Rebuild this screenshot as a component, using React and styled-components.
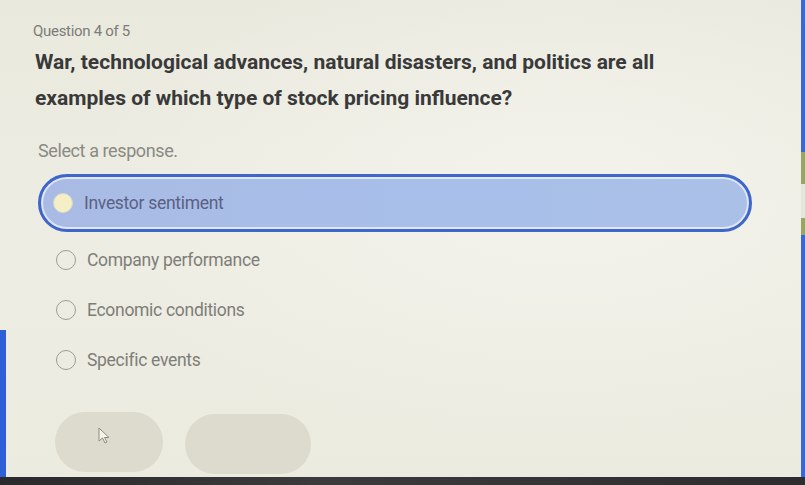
import React, { useState } from 'react';
import styled, { createGlobalStyle } from 'styled-components';

const GlobalStyle = createGlobalStyle`
  html, body {
    margin: 0;
    padding: 0;
    background: #ecebdf;
  }
  body {
    font-family: Roboto, "Liberation Sans", sans-serif;
  }
`;

const options = [
  'Investor sentiment',
  'Company performance',
  'Economic conditions',
  'Specific events',
];

function Cursor() {
  return (
    <svg width="16" height="18" viewBox="0 0 16 18">
      <path d="M2 1 L2 14 L5.5 11 L8 16 L10 15 L7.5 10.5 L12 10.5 Z" fill="#f4f3ea" stroke="#8d8b80" strokeWidth="1" strokeLinejoin="round" />
    </svg>
  );
}

function App() {
  const [selected, setSelected] = useState(0);

  return (
    <>
      <GlobalStyle />
      <Screen>
        <Body>
          <LeftRail>
            <RailPiece $h={330} $color="transparent" />
            <RailPiece $grow $color="#2f5fd6" />
          </LeftRail>
          <Quiz>
            <Counter>Question 4 of 5</Counter>
            <Prompt>
              War, technological advances, natural disasters, and politics are all
              examples of which type of stock pricing influence?
            </Prompt>
            <Hint>Select a response.</Hint>
            <OptionList>
              {options.map((label, i) => (
                <Option key={label} $active={selected === i} onClick={() => setSelected(i)}>
                  <Radio $active={selected === i} />
                  <OptionLabel $active={selected === i}>{label}</OptionLabel>
                </Option>
              ))}
            </OptionList>
            <Actions>
              <GhostButton $w={108}>
                <Cursor />
              </GhostButton>
              <GhostButton $w={126} $offset={2} />
            </Actions>
          </Quiz>
          <RightRail>
            <RailPiece $h={152} $color="#3a67d4" />
            <RailPiece $h={32} $color="#9aa466" />
            <RailPiece $h={34} $color="#e6e6dc" />
            <RailPiece $h={17} $color="#9aa466" />
            <RailPiece $grow $color="#3a67d4" />
          </RightRail>
        </Body>
        <BottomBar />
      </Screen>
    </>
  );
}

const Screen = styled.div`
  width: 805px;
  height: 485px;
  display: flex;
  flex-direction: column;
  overflow: hidden;
  background:
    radial-gradient(ellipse at 70% 40%, #f3f3ec 0%, rgba(243,243,236,0) 60%),
    linear-gradient(180deg, #eae9de 0%, #edede3 50%, #ecebe0 100%);
`;

const Body = styled.div`
  flex: 1;
  display: flex;
  min-height: 0;
`;

const LeftRail = styled.div`
  width: 6px;
  display: flex;
  flex-direction: column;
`;

const RightRail = styled.div`
  width: 4px;
  margin-left: auto;
  display: flex;
  flex-direction: column;
`;

const RailPiece = styled.div`
  height: ${p => (p.$grow ? 'auto' : `${p.$h}px`)};
  flex: ${p => (p.$grow ? 1 : 'none')};
  background: ${p => p.$color};
`;

const BottomBar = styled.div`
  height: 8px;
  background: linear-gradient(90deg, #2a2a2c, #3b3a3c 40%, #2d2c2e);
`;

const Quiz = styled.div`
  flex: 1;
  display: flex;
  flex-direction: column;
  padding: 22px 0 0 27px;
`;

const Counter = styled.div`
  font-size: 15px;
  color: #7c7c78;
  letter-spacing: -0.3px;
`;

const Prompt = styled.h2`
  margin: 4px 0 0 2px;
  width: 640px;
  font-size: 21px;
  font-weight: 700;
  line-height: 36px;
  color: #393939;
  letter-spacing: 0;
`;

const Hint = styled.div`
  margin: 24px 0 0 5px;
  font-size: 18px;
  color: #8a8a84;
  letter-spacing: -0.4px;
`;

const OptionList = styled.div`
  margin-top: 13px;
  display: flex;
  flex-direction: column;
`;

const Option = styled.div`
  display: flex;
  align-items: center;
  gap: 11px;
  cursor: pointer;
  box-sizing: border-box;
  width: ${p => (p.$active ? '714px' : 'auto')};
  height: ${p => (p.$active ? '58px' : '50px')};
  margin: ${p => (p.$active ? '0 0 3px 5px' : '0 0 0 23px')};
  padding-left: ${p => (p.$active ? '12px' : '0')};
  border-radius: 29px;
  border: ${p => (p.$active ? '3px solid #3f66c9' : 'none')};
  box-shadow: ${p => (p.$active ? 'inset 0 0 0 2px #dfe6f5' : 'none')};
  background: ${p => (p.$active ? 'linear-gradient(90deg, #a9bbe4, #a7bfe9 60%, #abc0e7)' : 'transparent')};
`;

const Radio = styled.span`
  width: 20px;
  height: 20px;
  border-radius: 50%;
  box-sizing: border-box;
  flex: none;
  border: ${p => (p.$active ? '1.5px solid #d9d8cf' : '1.5px solid #9d9d97')};
  background: ${p => (p.$active ? '#f4efc4' : 'transparent')};
`;

const OptionLabel = styled.span`
  font-size: 17.5px;
  color: ${p => (p.$active ? '#5a6184' : '#7e7e78')};
  letter-spacing: -0.3px;
`;

const Actions = styled.div`
  margin: 27px 0 0 22px;
  display: flex;
  align-items: flex-start;
  gap: 22px;
`;

const GhostButton = styled.div`
  width: ${p => p.$w}px;
  height: 60px;
  margin-top: ${p => p.$offset || 0}px;
  border-radius: 30px;
  background: #dcdbcd;
  display: flex;
  align-items: center;
  justify-content: center;
  svg {
    margin: 0 8px 12px 0;
  }
`;

export default App;
